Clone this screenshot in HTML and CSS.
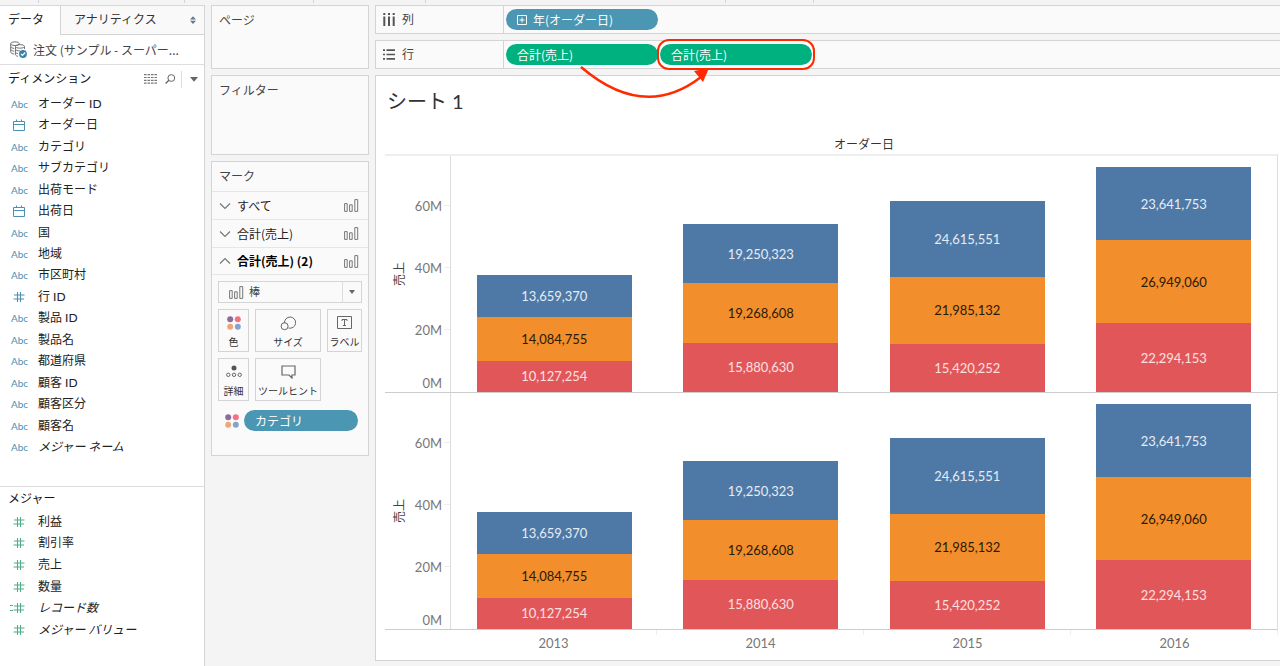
FILE: index.html
```html
<!DOCTYPE html>
<html lang="ja">
<head>
<meta charset="utf-8">
<title>シート 1</title>
<link rel="stylesheet" href="styles.css">
</head>
<body>
<svg class="defs" width="0" height="0" aria-hidden="true">
  <symbol id="calendar" viewBox="0 0 12 12"><path d="M.5 2.5h11v9H.5zM.5 5.5h11M3.5.5v2M8.500.5v2" fill="none" stroke="currentColor"/></symbol>
  <symbol id="hash" viewBox="0 0 12 12"><path d="M1 4h10.500M.5 8H11M4.500 1v10M7.500 1v10" fill="none" stroke="currentColor" stroke-width="1.100"/></symbol>
  <symbol id="bars" viewBox="0 0 15 13"><path d="M.6 4.600h2.600v7.800H.6zM5.600 5.800h2.600v6.600H5.600zM10.800.6h2.900v11.800h-2.900z" fill="none" stroke="#777"/></symbol>
  <symbol id="down" viewBox="0 0 12 8"><path d="M1 1.500l5 5 5-5" fill="none" stroke="#777" stroke-width="1.200"/></symbol>
  <symbol id="up" viewBox="0 0 12 8"><path d="M1 6.500l5-5 5 5" fill="none" stroke="#777" stroke-width="1.200"/></symbol>
  <symbol id="palette" viewBox="0 0 14 14"><circle cx="3.200" cy="3.200" r="3" fill="#8a6d9b"/><circle cx="10.800" cy="3.200" r="3" fill="#f87080"/><circle cx="3.200" cy="10.800" r="3" fill="#f2a676"/><circle cx="10.800" cy="10.800" r="3" fill="#82a4cd"/></symbol>
</svg>
<div class="app">
  <div class="toolbar"><i></i><i></i><i></i><i></i><i></i><i></i></div>

  <aside class="sidebar">
    <div class="tabs">
      <button class="tab active">データ</button>
      <button class="tab"><span>アナリティクス</span>
        <svg width="6" height="8" viewBox="0 0 6 8"><path d="M0 3.500L3 .3l3 3.200zM0 4.700h6L3 7.900z" fill="#66788a"/></svg>
      </button>
    </div>
    <div class="source">
      <svg width="17" height="17" viewBox="0 0 17 17" fill="none" stroke="#777"><ellipse cx="5" cy="2.700" rx="4.300" ry="1.900"/><path d="M.7 2.700v8.300c0 1 1.800 1.900 3.600 2M.7 5.500c0 1 1.800 1.800 3.600 1.900M.7 8.300c0 1 1.800 1.800 3.600 1.900M9.300 2.700v1"/><ellipse cx="10" cy="5.400" rx="4.500" ry="1.800"/><path d="M5.500 5.400v8.200c0 .8 1 1.500 2.500 1.700M14.500 5.400V8M5.500 8.200c0 1 2 1.800 4.500 1.800M5.500 11c0 .8 1 1.400 2.500 1.600"/><circle cx="13" cy="13" r="3.900" fill="#3784ab" stroke="none"/><path d="M11 13l1.500 1.500 2.700-3" stroke="#fff" stroke-width="1.200"/></svg>
      <span>注文 (サンプル - スーパー...</span>
    </div>
    <section class="dimensions">
      <div class="section-head">
        <h2>ディメンション</h2>
        <button class="icon-button" aria-label="表示"><svg width="13" height="10" viewBox="0 0 13 10" stroke="#777" stroke-width="1.200"><path d="M0 .7h13M0 3.500h13M0 6.300h13M0 9.100h13" stroke-dasharray="2.600 .9"/></svg></button>
        <button class="icon-button" aria-label="検索"><svg width="11" height="10" viewBox="0 0 11 10" fill="none" stroke="#666"><circle cx="6.300" cy="4" r="3.400"/><path d="M3.900 6.300L.6 9.500" stroke-width="1.300"/></svg></button>
        <button class="icon-button menu" aria-label="メニュー"><svg width="8" height="5" viewBox="0 0 8 5"><path d="M0 0h8L4 4.800z" fill="#666"/></svg></button>
      </div>
      <ul class="fields">
        <li><b>Abc</b>オーダー ID</li>
        <li><b><svg width="12" height="12"><use href="#calendar"/></svg></b>オーダー日</li>
        <li><b>Abc</b>カテゴリ</li>
        <li><b>Abc</b>サブカテゴリ</li>
        <li><b>Abc</b>出荷モード</li>
        <li><b><svg width="12" height="12"><use href="#calendar"/></svg></b>出荷日</li>
        <li><b>Abc</b>国</li>
        <li><b>Abc</b>地域</li>
        <li><b>Abc</b>市区町村</li>
        <li><b><svg width="12" height="12"><use href="#hash"/></svg></b>行 ID</li>
        <li><b>Abc</b>製品 ID</li>
        <li><b>Abc</b>製品名</li>
        <li><b>Abc</b>都道府県</li>
        <li><b>Abc</b>顧客 ID</li>
        <li><b>Abc</b>顧客区分</li>
        <li><b>Abc</b>顧客名</li>
        <li><b>Abc</b><em>メジャー ネーム</em></li>
      </ul>
    </section>
    <section class="measures">
      <div class="section-head"><h2>メジャー</h2></div>
      <ul class="fields green">
        <li><b><svg width="12" height="12"><use href="#hash"/></svg></b>利益</li>
        <li><b><svg width="12" height="12"><use href="#hash"/></svg></b>割引率</li>
        <li><b><svg width="12" height="12"><use href="#hash"/></svg></b>売上</li>
        <li><b><svg width="12" height="12"><use href="#hash"/></svg></b>数量</li>
        <li><b class="calc"><svg width="12" height="12"><use href="#hash"/></svg></b><em>レコード数</em></li>
        <li><b><svg width="12" height="12"><use href="#hash"/></svg></b><em>メジャー バリュー</em></li>
      </ul>
    </section>
  </aside>

  <div class="cards">
    <section class="card pages"><h2>ページ</h2></section>
    <section class="card filters"><h2>フィルター</h2></section>
    <section class="card marks">
      <h2>マーク</h2>
      <button class="mark-row"><svg width="12" height="8"><use href="#down"/></svg><span>すべて</span><svg width="15" height="13"><use href="#bars"/></svg></button>
      <button class="mark-row"><svg width="12" height="8"><use href="#down"/></svg><span>合計(売上)</span><svg width="15" height="13"><use href="#bars"/></svg></button>
      <button class="mark-row current"><svg width="12" height="8"><use href="#up"/></svg><span>合計(売上) (2)</span><svg width="15" height="13"><use href="#bars"/></svg></button>
      <div class="mark-body">
        <div class="mark-type">
          <svg width="15" height="13"><use href="#bars"/></svg>
          <select aria-label="マークの種類"><option>棒</option></select>
          <span class="arrow"><svg width="6" height="4" viewBox="0 0 6 4"><path d="M0 0h6L3 4z" fill="#666"/></svg></span>
        </div>
        <div class="mark-buttons">
          <button><svg width="14" height="14"><use href="#palette"/></svg>色</button>
          <button><svg width="16" height="15" viewBox="0 0 16 15" fill="none" stroke="#666"><path d="M4.500 7.200A5.600 5.600 0 1 1 8.500 12"/><circle cx="4.600" cy="10.200" r="3.500"/></svg>サイズ</button>
          <button><svg width="15" height="13" viewBox="0 0 15 13" fill="none" stroke="#666"><path d="M.5.5h14v12H.5zM5 5V3.500h5V5M7.500 3.500v6M6 9.500h3"/></svg>ラベル</button>
          <button><svg width="16" height="14" viewBox="0 0 16 14" fill="none" stroke="#666"><circle cx="8" cy="3" r="2.500" fill="#555" stroke="none"/><circle cx="2.300" cy="9.800" r="1.700"/><circle cx="8" cy="9.800" r="1.700"/><circle cx="13.700" cy="9.800" r="1.700"/></svg>詳細</button>
          <button><svg width="15" height="14" viewBox="0 0 15 14" fill="none" stroke="#666" stroke-width="1.200"><path d="M1 1h13v9h-3v3L8 10H1z"/></svg>ツールヒント</button>
        </div>
        <div class="encoding">
          <svg width="14" height="14"><use href="#palette"/></svg>
          <button class="pill blue">カテゴリ</button>
        </div>
      </div>
    </section>
  </div>

  <main class="workspace">
    <div class="shelf">
      <div class="shelf-name"><svg width="12" height="13" viewBox="0 0 12 13" stroke="#555" stroke-width="2"><path d="M1.300 0v2M6 0v2M10.700 0v2M1.300 3.500V13M6 3.500V13M10.700 3.500V13"/></svg>列</div>
      <div class="pills"><button class="pill blue"><svg width="10" height="10" viewBox="0 0 10 10" fill="none" stroke="#fff"><path d="M.5.500h9v9h-9zM2.500 5h5M5 2.500v5"/></svg>年(オーダー日)</button></div>
    </div>
    <div class="shelf">
      <div class="shelf-name"><svg width="12" height="11" viewBox="0 0 12 11" stroke="#555" stroke-width="1.700"><path d="M0 1.200h2M0 5.500h2M0 9.800h2M3.500 1.200H12M3.500 5.500H12M3.500 9.800H12"/></svg>行</div>
      <div class="pills">
        <button class="pill green">合計(売上)</button>
        <span class="ring"><button class="pill green">合計(売上)</button></span>
        <svg class="drag-arrow" width="132" height="36" viewBox="0 0 132 36"><path d="M2 2Q65 56 122 12" fill="none" stroke="#ff2a00" stroke-width="2.400"/><path d="M130 3L115 6l9 11z" fill="#ff2a00"/></svg>
      </div>
    </div>
    <section class="sheet">
      <h1>シート 1</h1>
      <div class="chart">
        <div class="field-label">オーダー日</div>
        <div class="panels">
          <div class="panel">
            <div class="axis"><span class="axis-title">売上</span><span class="tick sixty">60M</span><span class="tick forty">40M</span><span class="tick twenty">20M</span><span class="tick zero">0M</span></div>
            <div class="plot">
              <div class="stack"><i style="--v:38.58"></i><div class="a" style="--v:13.66">13,659,370</div><div class="b" style="--v:14.08">14,084,755</div><div class="c" style="--v:10.13">10,127,254</div></div>
              <div class="stack"><i style="--v:22.05"></i><div class="a" style="--v:19.25">19,250,323</div><div class="b" style="--v:19.27">19,268,608</div><div class="c" style="--v:15.88">15,880,630</div></div>
              <div class="stack"><i style="--v:14.43"></i><div class="a" style="--v:24.62">24,615,551</div><div class="b" style="--v:21.98">21,985,132</div><div class="c" style="--v:15.42">15,420,252</div></div>
              <div class="stack"><i style="--v:3.57"></i><div class="a" style="--v:23.64">23,641,753</div><div class="b" style="--v:26.95">26,949,060</div><div class="c" style="--v:22.29">22,294,153</div></div>
            </div>
          </div>
          <div class="panel">
            <div class="axis"><span class="axis-title">売上</span><span class="tick sixty">60M</span><span class="tick forty">40M</span><span class="tick twenty">20M</span><span class="tick zero">0M</span></div>
            <div class="plot">
              <div class="stack"><i style="--v:38.58"></i><div class="a" style="--v:13.66">13,659,370</div><div class="b" style="--v:14.08">14,084,755</div><div class="c" style="--v:10.13">10,127,254</div></div>
              <div class="stack"><i style="--v:22.05"></i><div class="a" style="--v:19.25">19,250,323</div><div class="b" style="--v:19.27">19,268,608</div><div class="c" style="--v:15.88">15,880,630</div></div>
              <div class="stack"><i style="--v:14.43"></i><div class="a" style="--v:24.62">24,615,551</div><div class="b" style="--v:21.98">21,985,132</div><div class="c" style="--v:15.42">15,420,252</div></div>
              <div class="stack"><i style="--v:3.57"></i><div class="a" style="--v:23.64">23,641,753</div><div class="b" style="--v:26.95">26,949,060</div><div class="c" style="--v:22.29">22,294,153</div></div>
            </div>
          </div>
        </div>
        <div class="years"><span>2013</span><span>2014</span><span>2015</span><span>2016</span></div>
      </div>
    </section>
  </main>
</div>
</body>
</html>
```
FILE: styles.css
```css
* { box-sizing: border-box; }
body {
  margin: 0;
  background: #f4f4f4;
  color: #222;
  font: 12px/18px Lato, "Noto Sans CJK JP", sans-serif;
}
h1, h2, ul { margin: 0; padding: 0; font-weight: normal; }
h2 { font-size: 12px; }
ul { list-style: none; }
button, select { font: inherit; color: inherit; background: none; border: 0; padding: 0; margin: 0; }
svg { display: block; flex: none; }
.defs { position: absolute; }

.app {
  display: grid;
  grid-template: 5px minmax(0, 1fr) / 205px 158px minmax(0, 1fr);
  column-gap: 6px;
  min-height: 100vh;
}
.toolbar { grid-column: 1 / -1; display: flex; }
.toolbar i { height: 3px; border-right: 1px solid #d4d4d4; width: 146px; }
.toolbar i:nth-child(1) { width: 39px; }
.toolbar i:nth-child(3) { width: 129px; }
.toolbar i:nth-child(4) { width: 112px; }
.toolbar i:nth-child(5) { width: 300px; }
.toolbar i:nth-child(6) { width: 88px; }

.sidebar {
  display: flex;
  flex-direction: column;
  background: #fff;
  border-top: 1px solid #d8d8d8;
  border-right: 1px solid #d4d4d4;
}
.tabs { display: flex; height: 29px; }
.tab { padding-bottom: 2px; text-align: left; }
.tab.active { width: 60px; padding-left: 8px; }
.tab:not(.active) {
  flex: 1;
  display: flex;
  align-items: center;
  justify-content: space-between;
  padding: 0 8px 1px 13px;
  background: #f9f9f9;
  border-left: 1px solid #d4d4d4;
  border-bottom: 1px solid #d4d4d4;
  color: #333;
}
.source {
  display: flex;
  align-items: center;
  gap: 6px;
  height: 30px;
  padding-left: 10px;
  border-bottom: 1px solid #ddd;
  color: #444;
  white-space: nowrap;
  font-family: "Noto Sans CJK JP", sans-serif;
}
.section-head { display: flex; align-items: center; padding-left: 8px; }
.section-head h2 { flex: 1; color: #111; }
.icon-button { margin-right: 8px; }
.icon-button + .icon-button { margin-right: 5px; }
.icon-button.menu.menu { margin: 0; padding: 6px 6px 6px 8px; border-left: 1px solid #ddd; }
.dimensions, .measures { display: flex; flex-direction: column; }
.dimensions { flex: 1; padding-bottom: 28px; }
.dimensions .section-head { height: 28px; }
.measures { height: 180px; border-top: 1px solid #ddd; padding-bottom: 25px; }
.measures .section-head { height: 24px; }
.fields { flex: 1; display: grid; grid-auto-rows: 1fr; }
.fields li { display: flex; align-items: center; }
.fields b {
  width: 38px;
  padding-left: 11px;
  color: #4a90b2;
  font-size: 10px;
  font-weight: normal;
}
.fields b svg { margin-left: 2px; }
.fields.green b { color: #4fae86; }
.fields .calc { display: flex; align-items: center; }
.fields .calc::before {
  content: "";
  width: 3px;
  height: 4px;
  margin-left: -1px;
  margin-right: -2px;
  border: solid #4fae86;
  border-width: 1px 0;
}

.cards { display: flex; flex-direction: column; gap: 6px; }
.card { background: #fafafa; border: 1px solid #d4d4d4; color: #444; }
.card h2 { padding: 6px 7px; }
.pages { height: 64px; }
.filters { height: 80px; }
.marks { padding-bottom: 18px; }
.marks h2 { height: 29px; }
.mark-row {
  display: flex;
  align-items: center;
  gap: 6px;
  width: 100%;
  height: 28px;
  padding: 0 9px 0 7px;
  border-top: 1px solid #e6e6e6;
  text-align: left;
  color: #222;
  font-family: "Noto Sans CJK JP", sans-serif;
}
.mark-row span { flex: 1; }
.mark-row.current { font-weight: bold; color: #000; border-bottom: 1px solid #e6e6e6; }
.mark-body { display: flex; flex-direction: column; gap: 6px; padding: 6px; }
.mark-type { display: flex; align-items: center; height: 22px; border: 1px solid #d4d4d4; padding-left: 10px; font-size: 11px; }
.mark-type select { flex: 1; align-self: stretch; appearance: none; padding-left: 5px; }
.mark-type .arrow { display: flex; align-items: center; align-self: stretch; padding: 0 6px; border-left: 1px solid #ddd; }
.mark-buttons { display: grid; grid-template-columns: 31fr 66fr 35fr; gap: 6px; }
.mark-buttons button {
  display: flex;
  flex-direction: column;
  align-items: center;
  justify-content: space-between;
  height: 43px;
  padding-top: 6px;
  border: 1px solid #d4d4d4;
  font-size: 10px;
  line-height: 17px;
  white-space: nowrap;
  color: #333;
}
.encoding { display: flex; align-items: center; gap: 5px; padding: 3px 4px 0 7px; }
.encoding .pill { flex: 1; }

.pill {
  display: flex;
  align-items: center;
  gap: 6px;
  height: 21px;
  padding: 0 11px;
  border-radius: 11px;
  color: #fff;
  font-family: "Noto Sans CJK JP", sans-serif;
}
.blue { background: #4a96b3; }
.green.pill { background: #00b180; }

.workspace { display: flex; flex-direction: column; gap: 6px; padding-bottom: 5px; }
.shelf { display: flex; height: 29px; background: #fafafa; border: 1px solid #d4d4d4; border-right: 0; }
.shelf-name { display: flex; align-items: center; gap: 7px; width: 127px; padding-left: 7px; color: #444; }
.pills { position: relative; flex: 1; display: flex; align-items: center; padding-left: 2px; border-left: 1px solid #d4d4d4; }
.pills .pill { width: 152px; }
.ring { position: relative; margin: -1px; padding: 3px 1px; border: 2px solid #ff2a00; border-radius: 12px; background: #fff; }
.drag-arrow { position: absolute; left: 75px; top: 24px; }

.sheet { flex: 1; display: flex; flex-direction: column; background: #fff; border: 1px solid #d4d4d4; border-right: 0; padding: 0 2px 0 9px; }
h1 { height: 50px; padding-left: 2px; font-size: 20px; line-height: 50px; color: #333; }
.chart { flex: 1; display: flex; flex-direction: column; color: #777; }
.field-label { height: 28px; margin-left: 65px; padding-top: 10px; text-align: center; color: #333; }
.panels { flex: 1; display: flex; flex-direction: column; border-top: 2px solid #eee; border-right: 1px solid #ddd; }
.panel { flex: 1; display: flex; border-bottom: 1px solid #ccc; font-size: 13px; }
.axis {
  display: grid;
  grid-template: 16fr 20fr 20fr 20fr / 24px 41px;
  width: 65px;
}
.axis-title {
  grid-area: 1 / 1 / -1 / 2;
  place-self: center end;
  writing-mode: vertical-rl;
  text-orientation: sideways;
  transform: rotate(180deg);
  font-size: 12px;
  color: #444;
}
.tick { grid-column: 2; margin-top: -9px; display: flex; justify-content: flex-end; gap: 2px; height: 18px; }
.tick::after { content: ""; align-self: center; width: 6px; border-top: 1px solid #eee; }
.sixty { grid-row: 2; }
.forty { grid-row: 3; }
.twenty { grid-row: 4; }
.zero { grid-row: 4; align-self: end; }
.zero::after { border: 0; }
.plot { flex: 1; display: grid; grid-template-columns: repeat(4, 1fr); border-left: 1px solid #ddd; }
.stack { display: flex; flex-direction: column; width: 75%; justify-self: center; color: #e6ecf3; }
.stack > * { flex: var(--v) 1 0; min-height: 0; display: flex; align-items: center; justify-content: center; }
.a { background: #4e79a7; }
.b { background: #f28e2b; color: #2b1a08; }
.c { background: #e15759; color: #fbe0e0; }
.years { display: grid; grid-template-columns: repeat(4, 1fr); height: 30px; margin-left: 65px; font-size: 13px; text-align: center; }
.years span { padding-top: 4px; background: linear-gradient(#eee, #eee) right top / 1px 5px no-repeat; }
```
